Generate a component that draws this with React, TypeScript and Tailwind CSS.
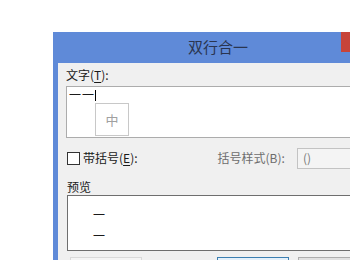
const FONT = "font-['Noto_Sans_CJK_SC','Liberation_Sans',sans-serif]";

function Underlined({ label, hot }: { label: string; hot: string }) {
  return (
    <span>
      {label}(<span className="underline underline-offset-2">{hot}</span>):
    </span>
  );
}

function Button({ variant }: { variant: "disabled" | "default" | "normal" }) {
  const cls =
    variant === "default"
      ? "border-[#3c7fb1] bg-[#e5f1fb]"
      : variant === "disabled"
        ? "border-[#d9d9d9] bg-[#f4f4f4]"
        : "border-[#adadad] bg-[#e1e1e1]";
  return <div className={`h-[22px] w-[72px] shrink-0 border ${cls}`} />;
}

export default function App() {
  return (
    <div className={`relative h-[260px] w-[350px] overflow-hidden bg-white ${FONT}`}>
      {/* dialog window */}
      <div className="absolute left-[53px] top-[32px] w-[330px] bg-[#5f8ad8] pb-[5px] pl-[5px] pr-[5px]">
        <div className="relative flex h-[31px] items-center justify-center text-[15px] text-[#2a3550]">
          双行合一
          <div className="absolute right-[-8px] top-0 h-[20px] w-[45px] bg-[#c7443a]" />
        </div>

        <div className="flex flex-col bg-[#f0f0f0] px-[8px] pt-[4px] text-[12px] leading-[16px] text-[#1a1a1a]">
          <div className="h-[17px]">
            <Underlined label="文字" hot="T" />
          </div>

          <div className="relative mt-[2px] h-[52px] w-[300px] border border-[#acacac] bg-white pl-[2px] pt-[1px]">
            <div className="flex h-[14px] items-center leading-[14px]">
              <span className="tracking-[1px]">一一</span>
              <span className="h-[11px] w-px bg-black" />
            </div>
            <div className="ml-[26px] mt-[1px] flex h-[33px] w-[34px] items-center justify-center border border-[#c8c8c8] text-[13px] text-[#a0a0a0]">
              中
            </div>
          </div>

          <div className="mt-[9px] flex h-[22px] items-center">
            <div className="ml-px h-[13px] w-[13px] border border-[#333] bg-white" />
            <span className="ml-[3px]">
              带括号(<span className="underline underline-offset-2">E</span>):
            </span>
            <span className="ml-[80px] text-[#6d6d6d]">
              括号样式(B):
            </span>
            <div className="ml-[12px] flex h-[21px] w-[70px] items-center border border-[#c3c3c3] bg-[#f4f4f4] pl-[5px] text-[#7a7a7a]">
              ()
            </div>
          </div>

          <div className="mt-[10px] h-[16px] pl-px">预览</div>

          <div className="ml-px mt-0 flex h-[56px] w-[300px] flex-col border border-[#6e6e6e] bg-white pl-[25px] pt-[8px]">
            <span className="h-[21px] leading-[21px]">一</span>
            <span className="h-[21px] leading-[21px]">一</span>
          </div>

          <div className="mt-[6px] flex gap-[9px] pb-[6px] pl-[4px]">
            <Button variant="disabled" />
            <div className="w-[65px]" />
            <Button variant="default" />
            <Button variant="normal" />
          </div>
        </div>
      </div>
    </div>
  );
}
